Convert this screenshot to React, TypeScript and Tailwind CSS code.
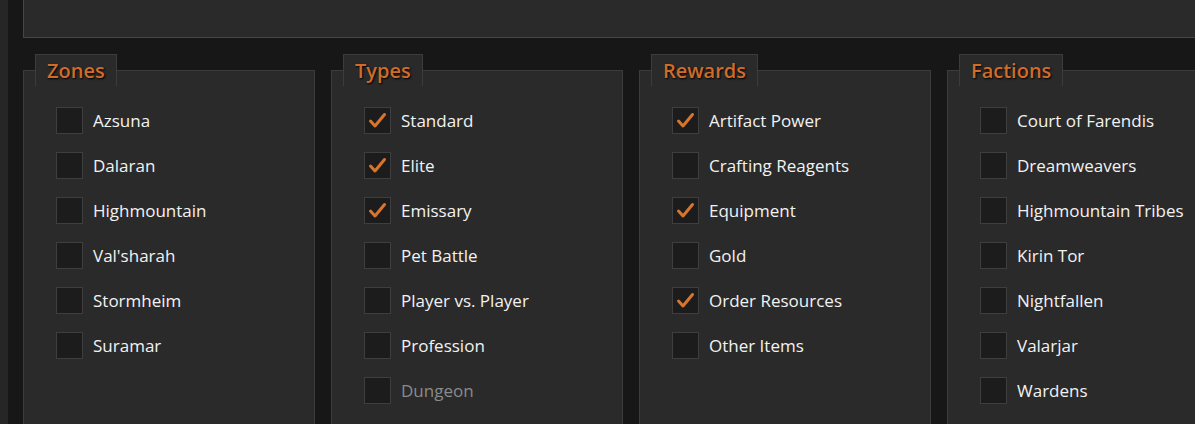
import React from 'react';

interface Option {
  label: string;
  checked?: boolean;
  disabled?: boolean;
}

interface Group {
  title: string;
  options: Option[];
}

const groups: Group[] = [
  {
    title: 'Zones',
    options: [
      { label: 'Azsuna' },
      { label: 'Dalaran' },
      { label: 'Highmountain' },
      { label: "Val'sharah" },
      { label: 'Stormheim' },
      { label: 'Suramar' },
    ],
  },
  {
    title: 'Types',
    options: [
      { label: 'Standard', checked: true },
      { label: 'Elite', checked: true },
      { label: 'Emissary', checked: true },
      { label: 'Pet Battle' },
      { label: 'Player vs. Player' },
      { label: 'Profession' },
      { label: 'Dungeon', disabled: true },
    ],
  },
  {
    title: 'Rewards',
    options: [
      { label: 'Artifact Power', checked: true },
      { label: 'Crafting Reagents' },
      { label: 'Equipment', checked: true },
      { label: 'Gold' },
      { label: 'Order Resources', checked: true },
      { label: 'Other Items' },
    ],
  },
  {
    title: 'Factions',
    options: [
      { label: 'Court of Farendis' },
      { label: 'Dreamweavers' },
      { label: 'Highmountain Tribes' },
      { label: 'Kirin Tor' },
      { label: 'Nightfallen' },
      { label: 'Valarjar' },
      { label: 'Wardens' },
    ],
  },
];

function CheckBox({ checked }: { checked?: boolean }) {
  return (
    <div className="w-[27px] h-[27px] shrink-0 border border-[#3e3e3e] bg-[#1c1c1c] flex items-center justify-center">
      {checked && (
        <svg width="25" height="25" viewBox="0 0 25 25">
          <path d="M5.5 13 L10 18 L19.5 6.5" fill="none" stroke="#d8742c" strokeWidth="3" strokeLinecap="round" strokeLinejoin="round" />
        </svg>
      )}
    </div>
  );
}

function FilterGroup({ group }: { group: Group }) {
  return (
    <fieldset className="w-[292px] h-[420px] shrink-0 border border-[#3c3c3c] bg-[#2a2a2a] pl-[32px]">
      <legend className="-ml-[21px] h-[32px] px-[11px] border border-b-0 border-[#3c3c3c] bg-[#2a2a2a] flex items-center">
        <span className="text-[20px] font-semibold text-[#cf6c2b] leading-none [text-shadow:1px_1px_2px_#000]">
          {group.title}
        </span>
      </legend>
      <div className="flex flex-col gap-[18px] pt-[21px]">
        {group.options.map((opt) => (
          <div key={opt.label} className="flex items-center gap-[10px] h-[27px]">
            <CheckBox checked={opt.checked} />
            <span className={`text-[17px] leading-none ${opt.disabled ? 'text-[#8a8a8a]' : 'text-[#f2f2f2]'}`}>
              {opt.label}
            </span>
          </div>
        ))}
      </div>
    </fieldset>
  );
}

export default function App() {
  return (
    <div className="w-[1195px] h-[424px] overflow-hidden flex bg-[#171717] font-['Open_Sans',sans-serif]">
      {/* left edge strip */}
      <div className="w-[8px] shrink-0 bg-[#262626]" />

      <div className="flex-1 flex flex-col pl-[15px] min-w-0">
        {/* top search panel */}
        <div className="h-[38px] shrink-0 bg-[#2a2a2a] border-l border-b border-[#464646]" />

        {/* filter groups */}
        <div className="flex gap-[16px] pt-[16px]">
          {groups.map((g) => (
            <FilterGroup key={g.title} group={g} />
          ))}
        </div>
      </div>
    </div>
  );
}
